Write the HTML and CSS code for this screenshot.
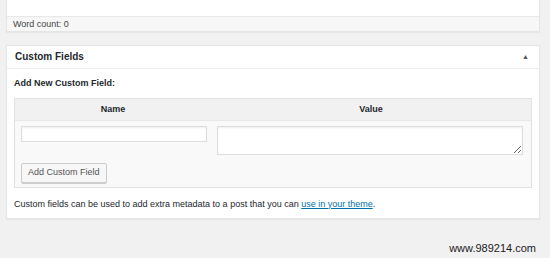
FILE: index.html
```html
<!DOCTYPE html>
<html>
<head>
    <meta charset="utf-8">
    <link rel="stylesheet" href="styles.css">
</head>
<body>
    <div class="wrap">
        <div class="editor-box">
            <div class="editor-area"></div>
            <div class="status-bar">Word count: 0</div>
        </div>

        <div class="postbox">
            <div class="postbox-head">
                <h2>Custom Fields</h2>
                <span class="toggle">&#9650;</span>
            </div>
            <div class="inside">
                <p class="add-title">Add New Custom Field:</p>
                <div class="meta-table">
                    <div class="meta-th">Name</div>
                    <div class="meta-th">Value</div>
                    <div class="meta-cell key-cell"><input type="text" class="meta-key"></div>
                    <div class="meta-cell value-cell"><textarea class="meta-value"></textarea></div>
                    <div class="meta-submit"><button class="btn">Add Custom Field</button></div>
                </div>
                <p class="help">Custom fields can be used to add extra metadata to a post that you can <a href="#">use in your theme</a>.</p>
            </div>
        </div>
    </div>
    <div class="watermark">www.989214.com</div>
</body>
</html>
```

FILE: styles.css
```css
body {
    font-family: "Liberation Sans", Arial, sans-serif;
    font-size: 9px;
    line-height: 1.4;
    color: #23282d;
    background-color: #f1f1f1;
    margin: 0;
}

.wrap {
    padding: 0 10px 0 6px;
}

.editor-box {
    background: #fff;
    border: 1px solid #e5e5e5;
    border-top: none;
    box-shadow: 0 1px 1px rgba(0, 0, 0, .04);
}

.editor-area {
    height: 16px;
}

.status-bar {
    height: 14px;
    line-height: 14px;
    padding: 0 6px;
    background: #f7f7f7;
    border-top: 1px solid #e8e8e8;
    color: #444;
}

.postbox {
    margin-top: 13px;
    background: #fff;
    border: 1px solid #e5e5e5;
    box-shadow: 0 1px 1px rgba(0, 0, 0, .04);
}

.postbox-head {
    display: flex;
    align-items: center;
    justify-content: space-between;
    height: 22px;
    padding: 0 10px 0 8px;
    border-bottom: 1px solid #eee;
}

.postbox-head h2 {
    margin: 0;
    font-size: 10px;
    font-weight: bold;
}

.toggle {
    font-size: 7px;
    color: #555;
}

.inside {
    padding: 8px 7px 0;
}

.add-title {
    margin: 0 0 8px;
    font-weight: bold;
}

.meta-table {
    display: grid;
    grid-template-columns: 38% 1fr;
    border: 1px solid #e1e1e1;
    background: #f9f9f9;
}

.meta-th {
    height: 21px;
    line-height: 21px;
    text-align: center;
    font-weight: bold;
    background: #f1f1f1;
    border-bottom: 1px solid #e8e8e8;
}

.meta-cell {
    padding-top: 5px;
}

.key-cell {
    padding-left: 6px;
    padding-right: 4px;
}

.value-cell {
    padding-left: 6px;
    padding-right: 8px;
}

.meta-key,
.meta-value {
    display: block;
    box-sizing: border-box;
    width: 100%;
    margin: 0;
    border: 1px solid #ddd;
    background: #fff;
    box-shadow: inset 0 1px 2px rgba(0, 0, 0, .07);
    font: inherit;
}

.meta-key {
    height: 16px;
}

.meta-value {
    height: 29px;
    resize: vertical;
}

.meta-submit {
    grid-column: 1 / 3;
    padding: 8px 6px 4px;
}

.btn {
    font: inherit;
    height: 20px;
    padding: 0 6px;
    color: #555;
    background: #f7f7f7;
    border: 1px solid #ccc;
    border-radius: 2px;
    box-shadow: 0 1px 0 #ccc;
}

.help {
    margin: 10px 0 0;
    padding-bottom: 8px;
}

.help a {
    color: #0073aa;
}

.watermark {
    text-align: right;
    padding: 22px 14px 0 0;
    font-size: 11px;
    color: #222;
}
```
